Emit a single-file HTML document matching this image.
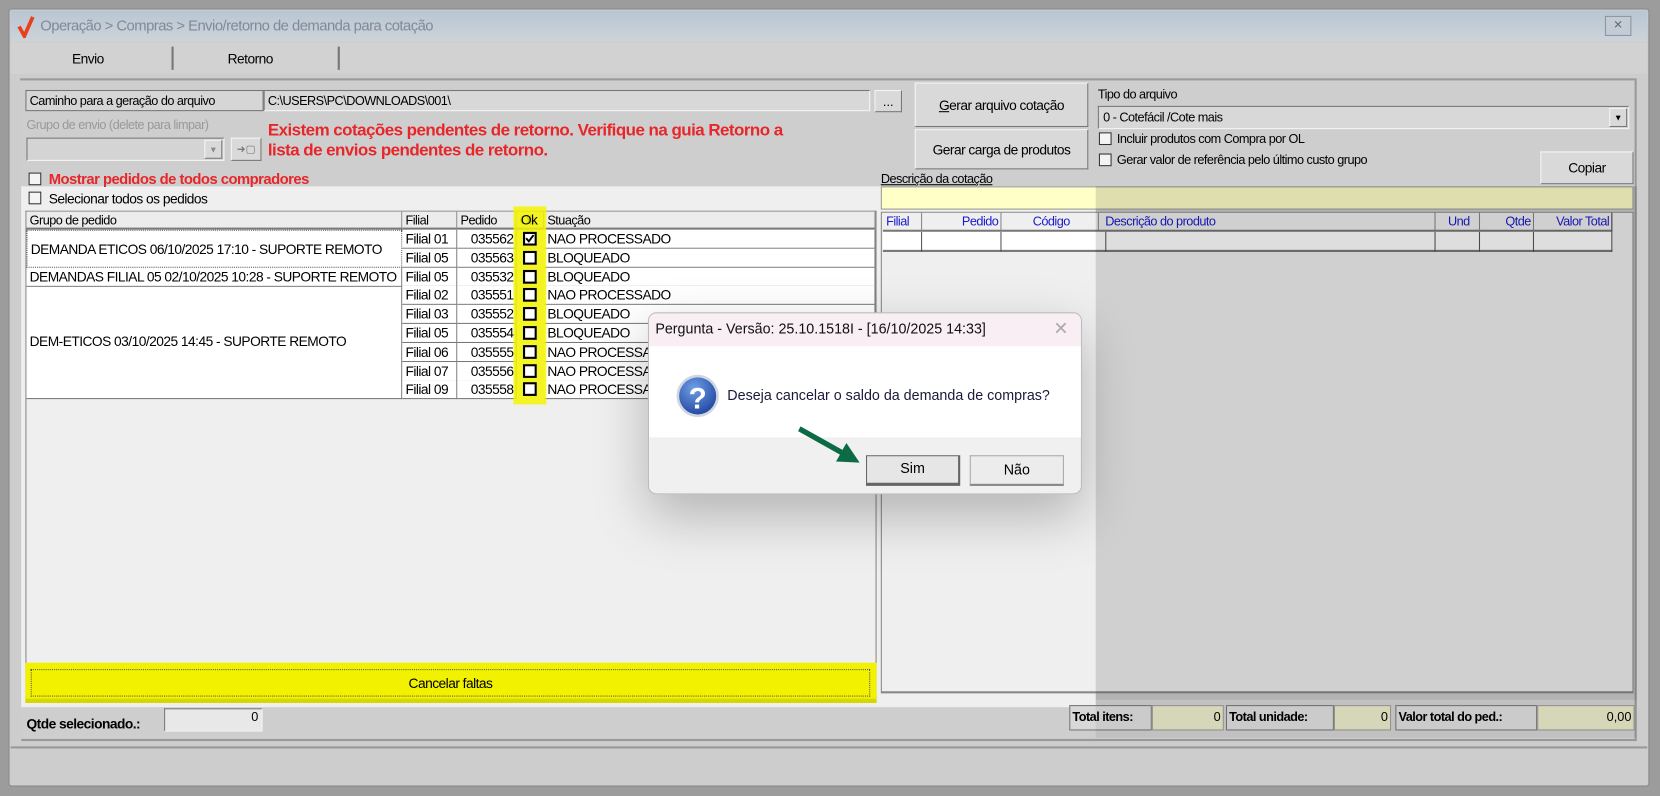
<!DOCTYPE html>
<html><head><meta charset="utf-8"><style>
*{box-sizing:border-box;margin:0;padding:0}
html,body{width:1660px;height:796px;overflow:hidden;background:#9c9c9c}
#s{position:absolute;left:0;top:0;width:1568px;height:752px;transform:scale(1.05867);transform-origin:0 0;font-family:"Liberation Sans Narrow","Liberation Sans",sans-serif;font-size:12px;color:#000}
.a{position:absolute}
.n{font-stretch:condensed;letter-spacing:-0.5px}
.btn{position:absolute;background:#d9d9d9;border:1px solid;border-color:#f4f4f4 #777 #777 #f4f4f4;display:flex;align-items:center;justify-content:center}
.inp{position:absolute;border:1px solid;border-color:#777 #f4f4f4 #f4f4f4 #777;background:#dcdcdc}
.cb{position:absolute;width:12px;height:12px;border:1px solid #333;background:#f4f4f4}
.c{position:absolute;border-right:1px solid #777;border-bottom:1px solid #777;background:#fff;white-space:nowrap;overflow:hidden;padding-left:3px;line-height:17px}
.ok{position:absolute;width:13px;height:13px;border:2px solid #000;background:#fff}
.h{position:absolute;border-right:1px solid #888;border-bottom:2px solid #777;line-height:16px;padding-left:3px;color:#000;background:#ececec}
.bh{color:#1a1acc;background:transparent}
</style></head><body><div id="s">
<div class="a" style="left:8px;top:8px;width:1550px;height:735px;background:#cdcdcd;border:1px solid #888;border-radius:3px"></div>
<div class="a" style="left:10px;top:10px;width:1546px;height:29px;background:linear-gradient(#b8c6d3,#cdd3da)"></div>
<svg class="a" style="left:16px;top:14px" width="18" height="22"><path d="M2 11 L7 20 L15 2" stroke="#e8401a" stroke-width="3.5" fill="none"/></svg>
<div class="a n" style="left:38px;top:16px;font-size:14px;color:#7e8a98">Operação &gt; Compras &gt; Envio/retorno de demanda para cotação</div>
<div class="a" style="left:1516px;top:15px;width:25px;height:19px;border:1px solid #8a96a2;background:#c3cbd4;color:#667;font-size:11px;text-align:center;line-height:17px">✕</div>
<div class="a" style="left:10px;top:40px;width:1546px;height:30px;background:#d2d2d2"></div>
<div class="a n" style="left:68px;top:48px;font-size:13px">Envio</div>
<div class="a" style="left:162px;top:44px;width:2px;height:22px;background:#777"></div>
<div class="a n" style="left:215px;top:48px;font-size:13px">Retorno</div>
<div class="a" style="left:319px;top:44px;width:2px;height:22px;background:#777"></div>
<div class="a" style="left:19px;top:74px;width:1527px;height:2px;background:#9a9a9a"></div>
<div class="a" style="left:20px;top:76px;width:1526px;height:624px;background:#cecece;border-right:2px solid #999;border-bottom:2px solid #999"></div>
<div class="a" style="left:20px;top:176px;width:1015px;height:492px;background:#efefef"></div>
<div class="a n" style="left:24px;top:85px;width:225px;height:20px;border:1px solid #777;background:#d6d6d6;padding:2px 3px">Caminho para a geração do arquivo</div>
<div class="inp n" style="left:249px;top:85px;width:573px;height:20px;padding:2px 3px;background:#d8d8d8">C:\USERS\PC\DOWNLOADS\001\</div>
<div class="btn" style="left:826px;top:85px;width:26px;height:21px">...</div>
<div class="btn n" style="left:864px;top:78px;width:164px;height:42px;font-size:13px"><u>G</u>erar arquivo cotação</div>
<div class="btn n" style="left:864px;top:122px;width:164px;height:38px;font-size:13px">Gerar carga de produtos</div>
<div class="a n" style="left:1037px;top:82px">Tipo do arquivo</div>
<div class="inp n" style="left:1037px;top:100px;width:502px;height:22px;padding:3px 4px;background:#d8d8d8">0 - Cotefácil /Cote mais</div>
<div class="btn" style="left:1520px;top:102px;width:17px;height:18px;font-size:8px">▼</div>
<div class="cb" style="left:1038px;top:125px"></div><div class="a n" style="left:1055px;top:124px">Incluir produtos com Compra por OL</div>
<div class="cb" style="left:1038px;top:145px"></div><div class="a n" style="left:1055px;top:144px">Gerar valor de referência pelo último custo grupo</div>
<div class="btn n" style="left:1455px;top:143px;width:88px;height:31px;font-size:13px">Copiar</div>
<div class="a n" style="left:25px;top:111px;color:#999">Grupo de envio (delete para limpar)</div>
<div class="inp" style="left:25px;top:130px;width:187px;height:22px;background:#d4d4d4"></div>
<div class="btn" style="left:193px;top:132px;width:17px;height:18px;font-size:8px;color:#888">▼</div>
<div class="btn" style="left:218px;top:130px;width:29px;height:22px;font-size:10px;color:#777">➜▢</div>
<div class="a n" style="left:253px;top:114px;color:#e8262a;font-weight:bold;font-size:16px;line-height:19px">Existem cotações pendentes de retorno. Verifique na guia Retorno a<br>lista de envios pendentes de retorno.</div>
<div class="cb" style="left:27px;top:163px"></div><div class="a n" style="left:46px;top:161px;color:#e8262a;font-weight:bold;font-size:14px">Mostrar pedidos de todos compradores</div>
<div class="cb" style="left:27px;top:181px"></div><div class="a n" style="left:46px;top:180px;font-size:13px">Selecionar todos os pedidos</div>
<div class="a" style="left:24px;top:199px;width:804px;height:461px;border:1px solid #888;background:#efefef;border-bottom:2px solid #777"></div>
<div class="h n" style="left:25px;top:200px;width:355px;height:17px">Grupo de pedido</div>
<div class="h n" style="left:380px;top:200px;width:52px;height:17px">Filial</div>
<div class="h n" style="left:432px;top:200px;width:56px;height:17px">Pedido</div>
<div class="h n" style="left:488px;top:200px;width:26px;height:17px">Ok</div>
<div class="h n" style="left:514px;top:200px;width:313px;height:17px">Stuação</div>
<div class="c n" style="left:25px;top:217px;width:355px;height:36px;line-height:35px;font-size:13px;border:1px dotted #555">DEMANDA ETICOS 06/10/2025 17:10 - SUPORTE REMOTO</div>
<div class="c n" style="left:25px;top:253px;width:355px;height:18px;font-size:13px">DEMANDAS FILIAL 05 02/10/2025 10:28 - SUPORTE REMOTO</div>
<div class="c n" style="left:25px;top:271px;width:355px;height:106px;line-height:104px;font-size:13px">DEM-ETICOS 03/10/2025 14:45 - SUPORTE REMOTO</div>
<div id="rows"></div>
<div class="a" style="left:485px;top:195px;width:31px;height:187px;background:rgba(245,245,0,.85)"></div>
<div class="a n" style="left:492px;top:200px;font-size:13px">Ok</div>
<div class="a" style="left:24px;top:626px;width:804px;height:38px;background:#f2f200;border-bottom:4px solid #d6d600"></div>
<div class="a n" style="left:29px;top:632px;width:793px;height:26px;border:1px dotted #555;text-align:center;line-height:25px;font-size:13px">Cancelar faltas</div>
<div class="a n" style="left:25px;top:676px;font-weight:bold;font-size:13px">Qtde selecionado.:</div>
<div class="inp" style="left:155px;top:669px;width:93px;height:22px;background:#e8e8e8;text-align:right;padding-right:3px">0</div>
<div class="a n" style="left:832px;top:162px;text-decoration:underline">Descrição da cotação</div>
<div class="a" style="left:832px;top:176px;width:711px;height:22px;background:#ffffc8;border:1px solid #999"></div>
<div class="a" style="left:832px;top:200px;width:711px;height:455px;border:1px solid #888;background:#efefef;border-bottom:2px solid #888"></div>
<div class="h n bh" style="left:834px;top:201px;width:37px;height:18px">Filial</div>
<div class="h n bh" style="left:871px;top:201px;width:75px;height:18px;text-align:right;padding-right:2px">Pedido</div>
<div class="h n bh" style="left:946px;top:201px;width:92px;height:18px;text-align:center">Código</div>
<div class="h n bh" style="left:1038px;top:201px;width:318px;height:18px;padding-left:6px">Descrição do produto</div>
<div class="h n bh" style="left:1356px;top:201px;width:42px;height:18px;text-align:center">Und</div>
<div class="h n bh" style="left:1398px;top:201px;width:51px;height:18px;text-align:right;padding-right:2px">Qtde</div>
<div class="h n bh" style="left:1449px;top:201px;width:74px;height:18px;text-align:right;padding-right:2px">Valor Total</div>
<div class="a" style="left:834px;top:219px;width:689px;height:19px;background:#fff;border-bottom:2px solid #777"></div>
<div class="a" style="left:870px;top:219px;width:1px;height:19px;background:#555"></div>
<div class="a" style="left:945px;top:219px;width:1px;height:19px;background:#555"></div>
<div class="a" style="left:1044px;top:219px;width:1px;height:19px;background:#555"></div>
<div class="a" style="left:1355px;top:219px;width:1px;height:19px;background:#555"></div>
<div class="a" style="left:1397px;top:219px;width:1px;height:19px;background:#555"></div>
<div class="a" style="left:1448px;top:219px;width:1px;height:19px;background:#555"></div>
<div class="a" style="left:1522px;top:201px;width:1px;height:37px;background:#555"></div>
<div class="a n" style="left:1010px;top:666px;width:78px;height:24px;border:1px solid #777;background:#d8d8d8;font-weight:bold;line-height:20px;padding-left:2px">Total itens:</div>
<div class="a" style="left:1088px;top:666px;width:68px;height:24px;border:1px solid #999;background:#e4e4c4;text-align:right;line-height:20px;padding-right:2px">0</div>
<div class="a n" style="left:1158px;top:666px;width:102px;height:24px;border:1px solid #777;background:#d8d8d8;font-weight:bold;line-height:20px;padding-left:2px">Total unidade:</div>
<div class="a" style="left:1260px;top:666px;width:54px;height:24px;border:1px solid #999;background:#e4e4c4;text-align:right;line-height:20px;padding-right:2px">0</div>
<div class="a n" style="left:1318px;top:666px;width:134px;height:24px;border:1px solid #777;background:#d8d8d8;font-weight:bold;line-height:20px;padding-left:2px">Valor total do ped.:</div>
<div class="a" style="left:1452px;top:666px;width:92px;height:24px;border:1px solid #999;background:#e4e4c4;text-align:right;line-height:20px;padding-right:2px">0,00</div>
<div class="a" style="left:1035px;top:176px;width:511px;height:485px;background:rgba(0,0,0,.13)"></div>
<div class="a" style="left:1035px;top:661px;width:511px;height:36px;background:rgba(0,0,0,.06)"></div>
<div class="a" style="left:10px;top:705px;width:1546px;height:2px;background:#999"></div>
<div class="a" style="left:612px;top:295px;width:410px;height:172px;border-radius:8px;box-shadow:0 20px 50px rgba(0,0,0,.25)"></div>
<div class="a" style="left:612px;top:295px;width:410px;height:172px;border-radius:8px;border:1px solid #bbb;background:#f0f0f0;overflow:hidden;font-family:'Liberation Sans',sans-serif">
 <div class="a" style="left:0;top:0;width:410px;height:31px;background:#f8eef3;padding:7px 6px;font-size:13.5px;color:#111">Pergunta - Versão: 25.10.1518I - [16/10/2025 14:33]</div>
 <div class="a" style="left:382px;top:5px;font-size:17px;color:#aaa">✕</div>
 <div class="a" style="left:0;top:31px;width:410px;height:86px;background:#fff"></div>
 <svg class="a" style="left:25px;top:57px" width="44" height="44"><defs><radialGradient id="g" cx=".4" cy=".3" r=".8"><stop offset="0" stop-color="#6f9fe8"/><stop offset="1" stop-color="#1b3f9a"/></radialGradient></defs><circle cx="21" cy="21" r="20" fill="#cfd6df"/><circle cx="21" cy="21" r="17.5" fill="url(#g)"/><text x="21" y="33" text-anchor="middle" font-family="Liberation Sans" font-weight="bold" font-size="28" fill="#fff">?</text></svg>
 <div class="a" style="left:74px;top:70px;font-size:13.5px;color:#1a1a3a">Deseja cancelar o saldo da demanda de compras?</div>
 <div class="a" style="left:205px;top:134px;width:89px;height:29px;background:#e6e6e6;border:1px solid #666;border-bottom:3px solid #666;border-right:2px solid #666;font-size:13.5px;text-align:center;line-height:24px">Sim</div>
 <div class="a" style="left:303px;top:134px;width:89px;height:29px;background:#ececec;border:1px solid #aaa;border-bottom:2px solid #888;font-size:13.5px;text-align:center;line-height:25px">Não</div>
</div>
<svg class="a" style="left:748px;top:400px" width="70" height="44"><path d="M5.8 7.2 L8.2 2.8 L47.8 25 L51.5 18.5 L64 37 L41.7 35.9 L45.4 29.4 Z" fill="#0c6b45"/></svg>
<script>
var d=[["Filial 01","035562","NAO PROCESSADO",1],["Filial 05","035563","BLOQUEADO"],["Filial 05","035532","BLOQUEADO"],["Filial 02","035551","NAO PROCESSADO"],["Filial 03","035552","BLOQUEADO"],["Filial 05","035554","BLOQUEADO"],["Filial 06","035555","NAO PROCESSADO"],["Filial 07","035556","NAO PROCESSADO"],["Filial 09","035558","NAO PROCESSADO"]];
var h="";d.forEach(function(r,i){var y=217+i*17.8;
h+='<div class="c n" style="left:380px;top:'+y+'px;width:52px;height:18px;font-size:13px">'+r[0]+'</div>'+
'<div class="c n" style="left:432px;top:'+y+'px;width:56px;height:18px;font-size:13px;text-align:right;padding-right:2px">'+r[1]+'</div>'+
'<div class="c n" style="left:514px;top:'+y+'px;width:313px;height:18px;font-size:13px">'+r[2]+'</div>';});
document.getElementById('rows').outerHTML=h;
var o="";d.forEach(function(r,i){var y=219+i*17.8;o+='<div class="ok" style="left:494px;top:'+y+'px">'+(r[3]?'<svg width="9" height="9" style="position:absolute;left:0;top:0"><path d="M1 4 L3.5 7 L8 1" stroke="#000" stroke-width="1.8" fill="none"/></svg>':'')+'</div>';});
document.getElementById('s').insertAdjacentHTML('beforeend','<div>'+o+'</div>');
</script>
</div></body></html>
